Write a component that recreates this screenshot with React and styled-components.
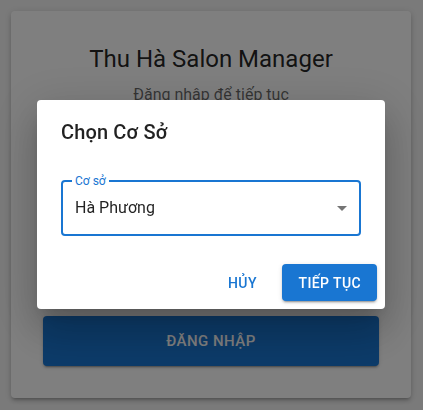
import React from "react";
import styled, { createGlobalStyle } from "styled-components";

const Global = createGlobalStyle`
  * { box-sizing: border-box; }
  html, body { margin: 0; padding: 0; }
  body {
    background: #f5f5f5;
    font-family: Roboto, "Noto Sans", Arial, sans-serif;
    color: rgba(0,0,0,0.87);
    width: 423px;
    height: 410px;
    overflow: hidden;
  }
`;

const Page = styled.div`
  display: flex;
  justify-content: center;
  padding: 11px 12px 0 11px;
`;

const Card = styled.div`
  width: 400px;
  background: #fff;
  border-radius: 4px;
  padding: 32px;
  box-shadow: 0 3px 3px -2px rgba(0,0,0,0.2), 0 3px 4px 0 rgba(0,0,0,0.14), 0 1px 8px 0 rgba(0,0,0,0.12);
  display: flex;
  flex-direction: column;
`;

const Heading = styled.h1`
  margin: 0;
  font-size: 24px;
  line-height: 32px;
  font-weight: 400;
  text-align: center;
`;

const Sub = styled.p`
  margin: 8px 0 24px;
  font-size: 16px;
  line-height: 24px;
  color: rgba(0,0,0,0.6);
  text-align: center;
`;

const Field = styled.div`
  position: relative;
  height: 56px;
  margin: ${(p) => p.$mt ?? 16}px 0 ${(p) => p.$mb ?? 8}px;
  border: ${(p) => (p.$focused ? "2px solid #1976d2" : "1px solid rgba(0,0,0,0.23)")};
  border-radius: 4px;
  display: flex;
  align-items: center;
  padding: 0 ${(p) => (p.$focused ? 5 : 6)}px 0 ${(p) => (p.$focused ? 12 : 13)}px;
`;

const FieldLabel = styled.span`
  position: absolute;
  top: -9px;
  left: 9px;
  padding: 0 3px;
  background: #fff;
  font-size: 12px;
  line-height: 16px;
  color: #1976d2;
`;

const Value = styled.span`
  flex: 1;
  font-size: 16px;
  line-height: 24px;
  color: rgba(0,0,0,0.87);
`;

const LoginButton = styled.button`
  margin-top: 25px;
  height: 50px;
  border: 0;
  border-radius: 4px;
  background: #1976d2;
  color: #fff;
  font-family: inherit;
  font-size: 15px;
  font-weight: 500;
  letter-spacing: 0.46px;
  text-transform: uppercase;
  box-shadow: 0 3px 1px -2px rgba(0,0,0,0.2), 0 2px 2px 0 rgba(0,0,0,0.14), 0 1px 5px 0 rgba(0,0,0,0.12);
`;

const Backdrop = styled.div`
  position: fixed;
  inset: 0;
  padding: 0 1px 1px 0;
  background: rgba(0,0,0,0.5);
  display: flex;
  align-items: center;
  justify-content: center;
`;

const Dialog = styled.div`
  width: 348px;
  background: #fff;
  border-radius: 4px;
  box-shadow: 0 11px 15px -7px rgba(0,0,0,0.2), 0 24px 38px 3px rgba(0,0,0,0.14), 0 9px 46px 8px rgba(0,0,0,0.12);
  display: flex;
  flex-direction: column;
`;

const DialogTitle = styled.h2`
  margin: 0;
  padding: 16px 24px;
  font-size: 20px;
  line-height: 32px;
  font-weight: 500;
  letter-spacing: 0.15px;
`;

const DialogContent = styled.div`
  padding: 0 24px 20px;
`;

const Actions = styled.div`
  display: flex;
  justify-content: flex-end;
  align-items: center;
  gap: 8px;
  padding: 8px;
`;

const Btn = styled.button`
  min-width: 64px;
  height: 36.5px;
  padding: ${(p) => (p.$contained ? "6px 16px" : "6px 8px")};
  border: 0;
  border-radius: 4px;
  font-family: inherit;
  font-size: 14px;
  font-weight: 500;
  letter-spacing: 0.4px;
  text-transform: uppercase;
  background: ${(p) => (p.$contained ? "#1976d2" : "transparent")};
  color: ${(p) => (p.$contained ? "#fff" : "#1976d2")};
  box-shadow: ${(p) =>
    p.$contained
      ? "0 3px 1px -2px rgba(0,0,0,0.2), 0 2px 2px 0 rgba(0,0,0,0.14), 0 1px 5px 0 rgba(0,0,0,0.12)"
      : "none"};
`;

const Arrow = () => (
  <svg width="24" height="24" viewBox="0 0 24 24" fill="rgba(0,0,0,0.54)">
    <path d="M7 10l5 5 5-5z" />
  </svg>
);

export default function App() {
  return (
    <>
      <Global />
      <Page>
        <Card>
          <Heading>Thu Hà Salon Manager</Heading>
          <Sub>Đăng nhập để tiếp tục</Sub>
          <Field />
          <Field />
          <LoginButton>Đăng nhập</LoginButton>
        </Card>
      </Page>
      <Backdrop>
        <Dialog>
          <DialogTitle>Chọn Cơ Sở</DialogTitle>
          <DialogContent>
            <Field $focused $mb={0}>
              <FieldLabel>Cơ sở</FieldLabel>
              <Value>Hà Phương</Value>
              <Arrow />
            </Field>
          </DialogContent>
          <Actions>
            <Btn>Hủy</Btn>
            <Btn $contained>Tiếp tục</Btn>
          </Actions>
        </Dialog>
      </Backdrop>
    </>
  );
}
